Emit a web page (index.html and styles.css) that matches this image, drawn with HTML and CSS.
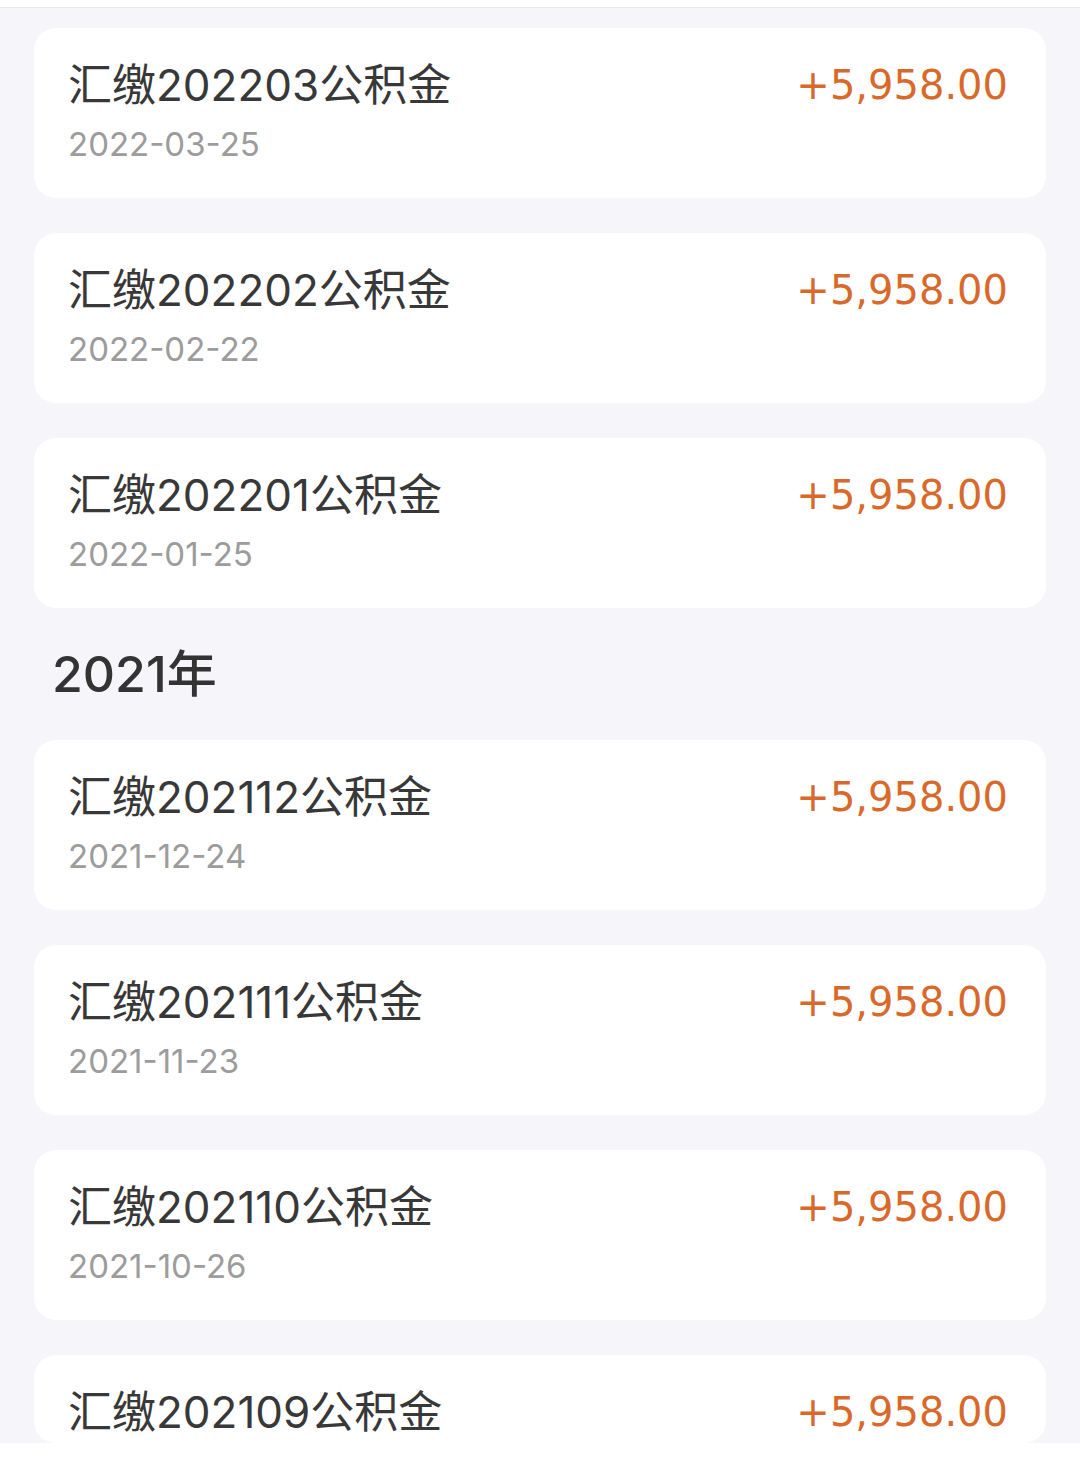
FILE: index.html
```html
<!DOCTYPE html>
<html>
  <head>
    <title>公积金明细</title>
    <link rel="stylesheet" href="styles.css">
  </head>
  <body>
    <div class="top-bar"></div>
    <div class="record-list">
      <div class="record-card">
        <div class="record-info">
          <p class="record-title">汇缴202203公积金</p>
          <p class="record-date">2022-03-25</p>
        </div>
        <p class="record-amount">+5,958.00</p>
      </div>
      <div class="record-card">
        <div class="record-info">
          <p class="record-title">汇缴202202公积金</p>
          <p class="record-date">2022-02-22</p>
        </div>
        <p class="record-amount">+5,958.00</p>
      </div>
      <div class="record-card">
        <div class="record-info">
          <p class="record-title">汇缴202201公积金</p>
          <p class="record-date">2022-01-25</p>
        </div>
        <p class="record-amount">+5,958.00</p>
      </div>

      <p class="year-title">2021年</p>

      <div class="record-card">
        <div class="record-info">
          <p class="record-title">汇缴202112公积金</p>
          <p class="record-date">2021-12-24</p>
        </div>
        <p class="record-amount">+5,958.00</p>
      </div>
      <div class="record-card">
        <div class="record-info">
          <p class="record-title">汇缴202111公积金</p>
          <p class="record-date">2021-11-23</p>
        </div>
        <p class="record-amount">+5,958.00</p>
      </div>
      <div class="record-card">
        <div class="record-info">
          <p class="record-title">汇缴202110公积金</p>
          <p class="record-date">2021-10-26</p>
        </div>
        <p class="record-amount">+5,958.00</p>
      </div>
      <div class="record-card last-card">
        <div class="record-info">
          <p class="record-title">汇缴202109公积金</p>
        </div>
        <p class="record-amount">+5,958.00</p>
      </div>
    </div>
  </body>
</html>
```

FILE: styles.css
```css
body {
    margin: 0;
    background-color: white;
    font-family: Inter, "Noto Sans CJK SC", sans-serif;
}
p {
    margin: 0;
}
.top-bar {
    height: 7px;
    background-color: white;
    border-bottom: 1px solid #e9e9ef;
}
.record-list {
    height: 1415px;
    overflow: hidden;
    background-color: #f5f5fa;
    padding: 20px 34px 0 34px;
    display: flex;
    flex-direction: column;
    gap: 35px;
}
.record-card {
    flex-shrink: 0;
    height: 170px;
    box-sizing: border-box;
    background-color: white;
    border-radius: 22px;
    padding: 30px 38px 0 34px;
    display: flex;
    justify-content: space-between;
    align-items: flex-start;
}
.last-card {
    height: 88px;
}
.record-title {
    font-size: 44px;
    line-height: 54px;
    color: #383838;
}
.record-date {
    font-size: 33px;
    line-height: 40px;
    margin-top: 12px;
    color: #9c9c9c;
}
.record-amount {
    font-family: "DejaVu Sans", sans-serif;
    font-size: 40px;
    line-height: 54px;
    color: #d9692b;
}
.year-title {
    flex-shrink: 0;
    height: 62px;
    line-height: 62px;
    padding-left: 18px;
    font-size: 50px;
    font-weight: 500;
    color: #333333;
}
```
